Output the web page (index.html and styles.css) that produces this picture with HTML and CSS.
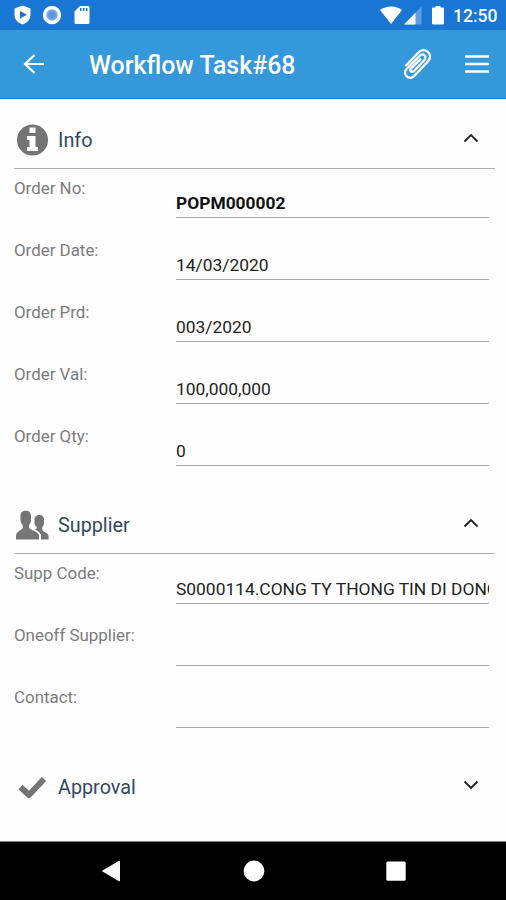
FILE: index.html
```html
<!DOCTYPE html>
<html lang="en">
<head>
  <meta charset="UTF-8">
  <meta name="viewport" content="width=device-width, initial-scale=1">
  <title>Workflow Task#68</title>
  <link rel="stylesheet" href="styles.css">
</head>
<body>

  <div class="status-bar">
    <svg width="17" height="20" viewBox="0 0 17 20">
      <path fill="#fff" d="M8.500 0.500L16.500 3.500V10C16.500 14.500 13 18 8.500 19.500C4 18 0.500 14.500 0.500 10V3.500Z"/>
      <path fill="#1976d2" d="M6 6l7 3.800L6 13.500z"/>
    </svg>
    <svg class="record" width="20" height="20" viewBox="0 0 20 20">
      <circle cx="10" cy="10" r="7.500" fill="#7eaee6" stroke="#fff" stroke-width="3.400"/>
      <circle cx="10" cy="10" r="3.800" fill="#5b98dd"/>
    </svg>
    <svg class="sd-card" width="16" height="20" viewBox="0 0 16 20">
      <path fill="#fff" d="M6 1h8a1.500 1.500 0 0 1 1.500 1.500v15A1.500 1.500 0 0 1 14 19H2a1.500 1.500 0 0 1-1.500-1.500V6.500z"/>
      <path stroke="#1976d2" stroke-width="1.600" d="M6.700 3v3M9.700 3v3M12.700 3v3"/>
    </svg>
    <div class="status-right">
      <svg width="22" height="20" viewBox="0 0 22 20">
        <path fill="#fff" d="M0 5C6 .2 16 .2 22 5L11 19z"/>
      </svg>
      <svg class="signal" width="18" height="20" viewBox="0 0 18 20">
        <path fill="#5e9fe0" d="M17.500 1.500v18H0z"/>
        <path fill="#fff" d="M11.500 7.700v11.800H0z"/>
      </svg>
      <svg class="battery" width="12" height="20" viewBox="0 0 12 20">
        <path fill="#fff" d="M3.500 1h5v1.500H11a1 1 0 0 1 1 1v15a1 1 0 0 1-1 1H1a1 1 0 0 1-1-1v-15a1 1 0 0 1 1-1h2.500z"/>
      </svg>
      <span class="clock">12:50</span>
    </div>
  </div>

  <header class="app-bar">
    <svg width="22" height="20" viewBox="0 0 22 20" fill="none" stroke="#fff" stroke-width="2.200">
      <path d="M21 10H2M11.500 1L2 10l9.500 9"/>
    </svg>
    <h1>Workflow Task#68</h1>
    <svg class="clip" width="30" height="32" viewBox="0 0 30 32" fill="none" stroke="#fff" stroke-width="2.400" stroke-linecap="round" stroke-linejoin="round">
      <path d="M3 17.500L15.500 4.500C21.500-1.500 31 6 25.300 13L11.500 27.800C6 33-1 26.500 3.500 21L16.500 8C20 4.500 24.500 8.500 21.500 12L11 23C8.800 25 6 22.800 8 20.300L17.300 11.300"/>
    </svg>
    <svg class="menu" width="24" height="20" viewBox="0 0 24 20" stroke="#fff" stroke-width="2.600">
      <path d="M0 2.500h24M0 10h24M0 17.500h24"/>
    </svg>
  </header>

  <main>
    <section>
      <div class="section-head">
        <svg width="34" height="34" viewBox="0 0 34 34">
          <circle cx="17.500" cy="17" r="15.500" fill="#757575"/>
          <path fill="#fff" d="M14.500 4.500h6V10h-6zM12 13h8.500v11H23v4H12v-4h2.500v-7H12z"/>
        </svg>
        <h2>Info</h2>
        <svg class="chevron" width="16" height="10" viewBox="0 0 16 10"><path d="M1.500 8.500l6.500-6.500 6.500 6.500"/></svg>
      </div>
      <div class="row"><label>Order No:</label><div class="value bold">POPM000002</div></div>
      <div class="row"><label>Order Date:</label><div class="value">14/03/2020</div></div>
      <div class="row"><label>Order Prd:</label><div class="value">003/2020</div></div>
      <div class="row"><label>Order Val:</label><div class="value">100,000,000</div></div>
      <div class="row"><label>Order Qty:</label><div class="value">0</div></div>
    </section>

    <section class="supplier">
      <div class="section-head">
        <svg width="34" height="34" viewBox="0 0 34 34" fill="#757575">
          <path d="M5.500 8C5.500 4.500 7.500 2.800 10.800 2.800S16 4.500 16 8V12C16 14.500 15 15.500 14.200 17V20C15 22.500 24 23 24 28V31.500H1V28C1 23 7 22.500 7.700 20V17C6.500 15.500 5.500 14.500 5.500 12Z"/>
          <path d="M19.500 12C19.500 8.500 21.500 7 24.500 7S29 8.500 29 12V15C29 17 28 18 27.300 19V22C28 24.500 33 24 33.500 28V31.500H26V28C26 24 21.500 22.500 20 21.500C21.500 21 22 20.500 21.800 19C20.500 18 19.500 17 19.500 15Z"/>
        </svg>
        <h2>Supplier</h2>
        <svg class="chevron" width="16" height="10" viewBox="0 0 16 10"><path d="M1.500 8.500l6.500-6.500 6.500 6.500"/></svg>
      </div>
      <div class="row"><label>Supp Code:</label><div class="value">S0000114.CONG TY THONG TIN DI DONG</div></div>
      <div class="row"><label>Oneoff Supplier:</label><div class="value"></div></div>
      <div class="row"><label>Contact:</label><div class="value"></div></div>
    </section>

    <section>
      <div class="section-head closed">
        <svg width="34" height="34" viewBox="0 0 34 34">
          <path fill="none" stroke="#757575" stroke-width="6" stroke-linejoin="round" d="M5.500 17l8.500 8L29 9"/>
        </svg>
        <h2>Approval</h2>
        <svg class="chevron" width="16" height="10" viewBox="0 0 16 10"><path d="M1.500 1.500L8 8l6.500-6.500"/></svg>
      </div>
    </section>
  </main>

  <nav class="nav-bar">
    <svg width="22" height="22" viewBox="0 0 22 22"><path fill="#fff" d="M20 1v20a.8.800 0 0 1-1 .2L2.500 11.500a.6.600 0 0 1 0-1L19 .8a.8.800 0 0 1 1 .2z"/></svg>
    <svg width="22" height="22" viewBox="0 0 22 22"><circle cx="11" cy="11" r="10.400" fill="#fff"/></svg>
    <svg width="22" height="22" viewBox="0 0 22 22"><rect x="1.300" y="1.500" width="19.400" height="19.300" rx="1.500" fill="#fff"/></svg>
  </nav>

</body>
</html>
```
FILE: styles.css
```css
* {
  box-sizing: border-box;
}
body {
  margin: 0;
  height: 900px;
  display: flex;
  flex-direction: column;
  font-family: Roboto, sans-serif;
  background-color: #fefefe;
  overflow: hidden;
}
svg {
  display: block;
  flex: none;
}
.status-bar {
  height: 30px;
  padding: 0 9px 0 14px;
  display: flex;
  align-items: center;
  background-color: #1976d2;
}
.record {
  margin-left: 11px;
}
.sd-card {
  margin-left: 12px;
}
.status-right {
  margin-left: auto;
  display: flex;
  align-items: center;
}
.signal {
  margin-left: 2px;
}
.battery {
  margin-left: 10px;
}
.clock {
  width: 44px;
  margin-left: 9px;
  padding-top: 2px;
  font-size: 17.5px;
  font-weight: 500;
  line-height: 20px;
  white-space: nowrap;
  color: #fff;
}
.app-bar {
  height: 69px;
  padding: 0 17px 0 23px;
  display: flex;
  align-items: center;
  background-color: #3498db;
  border-bottom: 1px solid #1c80cf;
}
.app-bar h1 {
  margin: 4px 0 0 44px;
  font-size: 24.9px;
  font-weight: 500;
  line-height: 30px;
  color: #fff;
}
.clip {
  margin-left: auto;
}
.menu {
  margin-left: 32px;
}
main {
  flex: 1;
}
section {
  margin-bottom: 5px;
}
.section-head {
  height: 70px;
  margin: 0 11px 0 14px;
  padding: 13px 16px 0 1px;
  display: flex;
  align-items: center;
  border-bottom: 1px solid #b0b0b0;
}
.section-head.closed {
  border-bottom: none;
}
.section-head h2 {
  margin: 2px auto 0 9px;
  font-size: 19.8px;
  font-weight: 400;
  line-height: 24px;
  color: #34495e;
}
.chevron {
  margin-bottom: 4px;
  fill: none;
  stroke: #222;
  stroke-width: 1.9;
}
.row {
  height: 62px;
  padding: 0 17px 0 14px;
  display: grid;
  grid-template-columns: 162px 1fr;
}
.row label {
  padding-top: 9px;
  font-size: 16.9px;
  line-height: 20px;
  color: #7c7c7c;
}
.value {
  height: 49px;
  padding-top: 24px;
  font-size: 17.4px;
  line-height: 20px;
  white-space: nowrap;
  overflow: hidden;
  color: #222;
  border-bottom: 1px solid #a8a8a8;
}
.supplier .value {
  height: 50px;
  padding-top: 25px;
}
.bold {
  font-weight: 700;
  color: #111;
}
.nav-bar {
  height: 59px;
  padding: 0 99px 1px 100px;
  display: flex;
  align-items: center;
  justify-content: space-between;
  background-color: #000;
  border-top: 1px solid #777;
}
```
